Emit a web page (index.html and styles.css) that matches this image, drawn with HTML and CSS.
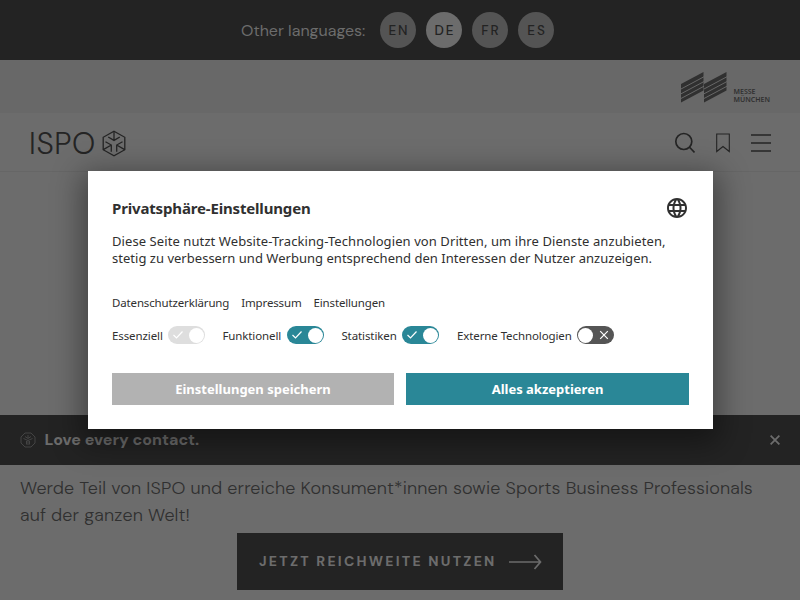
FILE: index.html
```html
<!DOCTYPE html>
<html lang="de">
<head>
<meta charset="utf-8">
<title>ISPO</title>
<link rel="stylesheet" href="styles.css">
</head>
<body>
<div class="page">
  <div class="languages">
    <span class="languages-label">Other languages:</span>
    <a class="lang">EN</a><a class="lang lang-active">DE</a><a class="lang">FR</a><a class="lang">ES</a>
  </div>
  <div class="partner">
    <svg class="messe-mark" width="46" height="32" viewBox="0 0 46 32" fill="#303030">
      <path d="M0 12 22.500 0V18.500L0 30.500zM23 12 45.500 0V18.500L23 30.500z"/>
      <path d="M0 17 23 4.730M0 21.800 23 9.530M0 26.500 23 14.230M23 17 46 4.730M23 21.800 46 9.530M23 26.500 46 14.230" stroke="#686868" stroke-width="1"/>
    </svg>
    <span class="messe-name">MESSE<br>MÜNCHEN</span>
  </div>
  <header class="nav">
    <div class="brand"><span class="brand-name">ISPO</span>
      <svg width="26" height="27" viewBox="0 0 26 27" fill="none" stroke="#242424" stroke-width="1.300">
        <defs><path id="arrow" d="M13 1.200V10.400M7.200 7 13 10.400 18.800 7"/></defs>
        <path d="M13 1.200 23.800 7.300V19.700L13 25.800 2.200 19.700V7.300z"/>
        <use href="#arrow"/><use href="#arrow" transform="rotate(120 13 13.5)"/><use href="#arrow" transform="rotate(240 13 13.5)"/>
      </svg>
    </div>
    <div class="nav-icons">
      <svg width="21" height="22" viewBox="0 0 21 22" fill="none" stroke="#242424" stroke-width="1.700"><circle cx="9.800" cy="9.500" r="8"/><path d="M15.300 15 20.500 20.500"/></svg>
      <svg width="14" height="20" viewBox="0 0 14 20" fill="none" stroke="#242424" stroke-width="1.100"><path d="M.7 1H13.300V18.500L7 13.500.7 18.500z"/></svg>
      <svg width="20" height="20" viewBox="0 0 20 20" stroke="#242424" stroke-width="1.600"><path d="M0 2H20M0 10H20M0 18H20"/></svg>
    </div>
  </header>
  <main class="content"></main>
  <section class="promo">
    <div class="promo-head">
      <svg width="16" height="16" viewBox="0 0 16 16" fill="none" stroke="#4c4c4c" stroke-width=".8"><path d="M5 1H11L15 5V11L11 15H5L1 11V5z"/><path d="M8 3V6M5 4.500 8 6.500 11 4.500M3.500 6.500 8 8.500 12.500 6.500M6.500 9V12.500M9.500 9V12.500M8 8.500V13"/></svg>
      <strong class="promo-title">Love every contact.</strong>
      <svg width="10" height="10" viewBox="0 0 10 10" stroke="#6c6c6c" stroke-width="1.800"><path d="M.6.600 9.400 9.400M9.400.600.600 9.400"/></svg>
    </div>
    <div class="promo-body">
      <p class="promo-text">Werde Teil von ISPO und erreiche Konsument*innen sowie Sports Business Professionals<br>auf der ganzen Welt!</p>
      <a class="cta"><span class="cta-label">JETZT REICHWEITE NUTZEN</span>
        <svg width="33" height="16" viewBox="0 0 33 16" fill="none" stroke="#6c6c6c" stroke-width="1.700"><path d="M0 8H31M25.500 1 31.500 8 25.500 15"/></svg>
      </a>
    </div>
  </section>
</div>

<div class="overlay">
  <div class="dialog">
    <div class="dialog-head">
      <h1 class="dialog-title">Privatsphäre-Einstellungen</h1>
      <svg class="globe" width="24" height="24" viewBox="0 0 24 24" fill="#303030"><path d="M11.990 2C6.470 2 2 6.480 2 12s4.470 10 9.990 10C17.520 22 22 17.520 22 12S17.520 2 11.990 2zm6.930 6h-2.950c-.32-1.250-.78-2.450-1.380-3.560 1.840.63 3.370 1.910 4.330 3.560zM12 4.040c.83 1.200 1.480 2.530 1.910 3.960h-3.820c.43-1.430 1.080-2.760 1.910-3.960zM4.260 14C4.100 13.360 4 12.690 4 12s.1-1.360.26-2h3.380c-.08.660-.14 1.320-.14 2s.06 1.340.14 2H4.260zm.82 2h2.950c.32 1.250.78 2.450 1.380 3.560-1.840-.63-3.370-1.900-4.330-3.560zm2.950-8H5.080c.96-1.660 2.490-2.930 4.330-3.560C8.810 5.550 8.350 6.750 8.030 8zM12 19.960c-.83-1.200-1.480-2.530-1.910-3.960h3.820c-.43 1.430-1.080 2.760-1.910 3.960zM14.340 14H9.660c-.09-.66-.16-1.320-.16-2s.07-1.350.16-2h4.680c.09.650.16 1.320.16 2s-.07 1.340-.16 2zm.25 5.560c.6-1.110 1.060-2.310 1.380-3.560h2.950c-.96 1.650-2.490 2.930-4.330 3.560zM16.360 14c.08-.66.14-1.320.14-2s-.06-1.340-.14-2h3.380c.16.640.26 1.310.26 2s-.1 1.360-.26 2h-3.380z"/></svg>
    </div>
    <p class="dialog-text"><span class="text-wide">Diese Seite nutzt Website-Tracking-Technologien von Dritten, um ihre Dienste anzubieten,</span><br>stetig zu verbessern und Werbung entsprechend den Interessen der Nutzer anzuzeigen.</p>
    <div class="links"><a>Datenschutzerklärung</a><a>Impressum</a><a>Einstellungen</a></div>
    <div class="toggles">
      <div class="option option-essential"><span>Essenziell</span><i class="switch switch-disabled"><svg width="12" height="10" viewBox="0 0 12 10"><path d="M1.500 5 4.500 8 10.500 1.500"/></svg><b class="knob"></b></i></div>
      <div class="option option-functional"><span>Funktionell</span><i class="switch"><svg width="12" height="10" viewBox="0 0 12 10"><path d="M1.500 5 4.500 8 10.500 1.500"/></svg><b class="knob"></b></i></div>
      <div class="option option-stats"><span>Statistiken</span><i class="switch"><svg width="12" height="10" viewBox="0 0 12 10"><path d="M1.500 5 4.500 8 10.500 1.500"/></svg><b class="knob"></b></i></div>
      <div class="option option-external"><span>Externe Technologien</span><i class="switch switch-off"><b class="knob"></b><svg width="10" height="10" viewBox="0 0 10 10"><path d="M1.200 1.200 8.800 8.800M8.800 1.200 1.200 8.800"/></svg></i></div>
    </div>
    <div class="actions"><button class="save">Einstellungen speichern</button><button class="accept">Alles akzeptieren</button></div>
  </div>
</div>
</body>
</html>
```
FILE: styles.css
```css
* { box-sizing: border-box; }
body { margin: 0; font-family: "DM Sans", Inter, sans-serif; color: #303030; }
.page { width: 800px; height: 600px; display: flex; flex-direction: column; overflow: hidden; background: #6c6c6c; }
svg { display: block; flex: none; }

.languages { height: 60px; flex: none; background: #232323; display: flex; align-items: center; padding-left: 241px; }
.languages-label { width: 139px; font-size: 16px; color: #6c6c6c; white-space: nowrap; }
.lang { width: 36px; height: 36px; margin-right: 10px; border-radius: 50%; background: #545454; color: #232323; display: flex; align-items: center; justify-content: center; font-size: 13.500px; font-weight: 500; letter-spacing: 2px; padding-left: 2px; }
.lang-active { background: #6c6c6c; }

.partner { height: 53px; flex: none; background: #686868; display: flex; padding: 11.500px 30px 0 681px; }
.messe-name { margin: 16px 0 0 6.500px; font: 600 7px/8px "Noto Sans", sans-serif; white-space: nowrap; }

.nav { height: 59px; flex: none; display: flex; justify-content: space-between; padding: 2px 29px 0 28px; border-bottom: 1px solid #666; }
.brand { display: flex; align-items: center; }
.brand-name { width: 73px; padding-left: 1px; font-size: 30px; font-weight: 300; letter-spacing: .6px; color: #242424; }
.nav-icons { display: flex; align-items: center; gap: 21px; }
.content { flex: 1; }

.promo { height: 185px; flex: none; }
.promo-head { height: 50px; background: #232323; display: flex; align-items: center; padding: 0 20px; }
.promo-title { flex: 1; margin-left: 8.500px; font-size: 16px; line-height: 20px; font-weight: 800; color: #6c6c6c; }
.promo-body { padding: 10px 20px 0; }
.promo-text { margin: 0; font-size: 18px; line-height: 27px; font-weight: 300; white-space: nowrap; letter-spacing: .115px; }
.cta { width: 326px; height: 57px; margin: 4px auto 0; background: #232323; color: #6c6c6c; display: flex; align-items: center; padding-left: 22px; }
.cta-label { width: 250px; font-size: 14px; font-weight: 800; line-height: 18px; padding-bottom: 1px; letter-spacing: 2.220px; white-space: nowrap; }

.overlay { position: absolute; inset: 0; overflow: hidden; padding: 171px 87px 0 88px; }
.dialog { height: 258px; background: #fff; padding: 24px; box-shadow: 0 8px 28px 6px rgba(0,0,0,.4); font-family: "Segoe UI", "Noto Sans", sans-serif; }
.dialog-head { display: flex; justify-content: space-between; height: 26px; align-items: center; }
.dialog-title { margin: 0; font-size: 15px; line-height: 20px; font-weight: 700; letter-spacing: -.16px; }
.dialog-text { margin: 12px 0 0; font-size: 13px; line-height: 17px; white-space: nowrap; letter-spacing: .02px; }
.text-wide { letter-spacing: .085px; }
.links { display: flex; gap: 12px; margin-top: 28px; font-size: 11.500px; letter-spacing: -.15px; line-height: 16px; }
.toggles { display: flex; height: 20px; margin-top: 14px; font-size: 11.500px; letter-spacing: -.1px; line-height: 16px; }
.option { display: flex; align-items: center; justify-content: space-between; white-space: nowrap; }
.option span { padding-top: 1px; }
.option-essential { width: 93px; }
.option-functional { width: 102px; margin-left: 17.400px; }
.option-stats { width: 98px; margin-left: 17px; }
.option-external { width: 157px; margin-left: 17.600px; }
.switch { width: 37px; height: 18px; border-radius: 9px; background: #2a8797; display: flex; align-items: center; justify-content: space-between; padding: 0 1.500px 0 4px; }
.switch svg { fill: none; stroke: #fff; stroke-width: 1.200; }
.switch-disabled { background: #dedede; }
.switch-off { background: #555; padding: 0 5px 0 1.500px; }
.knob { width: 15px; height: 15px; border-radius: 50%; background: #fff; }
.actions { display: flex; gap: 12px; margin-top: 28px; }
.actions button { height: 32px; border: 0; padding: 0; color: #fff; font: 700 13px/17px "Segoe UI", "Noto Sans", sans-serif; }
.save { width: 282px; background: #b2b2b2; }
.accept { width: 283px; background: #2a8797; }
```
